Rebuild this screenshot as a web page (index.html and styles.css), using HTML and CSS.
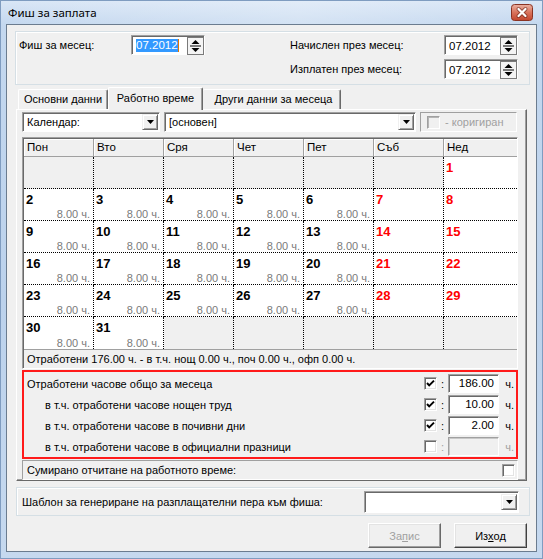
FILE: index.html
```html
<!DOCTYPE html>
<html>
<head>
<meta charset="utf-8">
<title>Фиш за заплата</title>
<link rel="stylesheet" href="styles.css">
</head>
<body>
<div class="window">
  <div class="titlebar">
    <span class="title">Фиш за заплата</span>
    <span class="close">
      <svg width="22" height="17" viewBox="0 0 22 17">
        <defs>
          <linearGradient id="cg" x1="0" y1="0" x2="0" y2="1">
            <stop offset="0" stop-color="#eab1a2"/>
            <stop offset="0.5" stop-color="#d9735c"/>
            <stop offset="1" stop-color="#c2452d"/>
          </linearGradient>
        </defs>
        <rect x="0.5" y="0.5" width="21" height="16" rx="3" fill="url(#cg)" stroke="#8a3323"/>
        <path d="M7.5 5 L14.5 12 M14.5 5 L7.5 12" stroke="#5a1a10" stroke-width="4" stroke-linecap="round" opacity="0.55"/>
        <path d="M7.5 5 L14.5 12 M14.5 5 L7.5 12" stroke="#fff" stroke-width="2.2" stroke-linecap="round"/>
      </svg>
    </span>
  </div>
  <div class="client">
    <div class="group-top">
      <div class="fld">
        <span class="lbl lbl-left">Фиш за месец:</span>
        <div class="spin">
          <span class="spin-text"><span class="sel">07.2012</span></span>
          <span class="spin-btn"><svg width="17" height="18" viewBox="0 0 17 18"><rect x="0.5" y="0.5" width="16" height="17" fill="#f4f4f4" stroke="#7a7a7a"/><polygon points="4.5,7 12.5,7 8.5,3" fill="#000"/><rect x="3" y="8.5" width="11" height="1" fill="#000"/><polygon points="4.5,11 12.5,11 8.5,15" fill="#000"/></svg></span>
        </div>
      </div>
      <div class="right-fields">
        <div class="fld">
          <span class="lbl lbl-right">Начислен през месец:</span>
          <div class="spin">
            <span class="spin-text">07.2012</span>
            <span class="spin-btn"><svg width="17" height="18" viewBox="0 0 17 18"><rect x="0.5" y="0.5" width="16" height="17" fill="#f4f4f4" stroke="#7a7a7a"/><polygon points="4.5,7 12.5,7 8.5,3" fill="#000"/><rect x="3" y="8.5" width="11" height="1" fill="#000"/><polygon points="4.5,11 12.5,11 8.5,15" fill="#000"/></svg></span>
          </div>
        </div>
        <div class="fld">
          <span class="lbl lbl-right">Изплатен през месец:</span>
          <div class="spin">
            <span class="spin-text">07.2012</span>
            <span class="spin-btn"><svg width="17" height="18" viewBox="0 0 17 18"><rect x="0.5" y="0.5" width="16" height="17" fill="#f4f4f4" stroke="#7a7a7a"/><polygon points="4.5,7 12.5,7 8.5,3" fill="#000"/><rect x="3" y="8.5" width="11" height="1" fill="#000"/><polygon points="4.5,11 12.5,11 8.5,15" fill="#000"/></svg></span>
          </div>
        </div>
      </div>
    </div>

    <div class="tabs">
      <div class="tab tab1">Основни данни</div>
      <div class="tab tab2 active">Работно време</div>
      <div class="tab tab3">Други данни за месеца</div>
    </div>

    <div class="panel">
      <div class="toolbar">
        <div class="combo combo1">
          <span class="combo-text">Календар:</span>
          <span class="dd"><svg width="7" height="4" viewBox="0 0 7 4"><polygon points="0,0 7,0 3.5,4" fill="#000"/></svg></span>
        </div>
        <div class="combo combo2">
          <span class="combo-text">[основен]</span>
          <span class="dd"><svg width="7" height="4" viewBox="0 0 7 4"><polygon points="0,0 7,0 3.5,4" fill="#000"/></svg></span>
        </div>
        <div class="checkgroup">
          <span class="chk dis"></span>
          <span class="dis-text">- коригиран</span>
        </div>
      </div>

      <div class="calendar">
        <div class="cal-head">
          <div class="hc">Пон</div><div class="hc">Вто</div><div class="hc">Сря</div><div class="hc">Чет</div><div class="hc">Пет</div><div class="hc">Съб</div><div class="hc">Нед</div>
        </div>
        <div class="cal-grid">
          <div class="c e"></div><div class="c e"></div><div class="c e"></div><div class="c e"></div><div class="c e"></div><div class="c e"></div><div class="c r"><b>1</b></div>
          <div class="c"><b>2</b><span class="h">8.00 ч.</span></div><div class="c"><b>3</b><span class="h">8.00 ч.</span></div><div class="c"><b>4</b><span class="h">8.00 ч.</span></div><div class="c"><b>5</b><span class="h">8.00 ч.</span></div><div class="c"><b>6</b><span class="h">8.00 ч.</span></div><div class="c r"><b>7</b></div><div class="c r"><b>8</b></div>
          <div class="c"><b>9</b><span class="h">8.00 ч.</span></div><div class="c"><b>10</b><span class="h">8.00 ч.</span></div><div class="c"><b>11</b><span class="h">8.00 ч.</span></div><div class="c"><b>12</b><span class="h">8.00 ч.</span></div><div class="c"><b>13</b><span class="h">8.00 ч.</span></div><div class="c r"><b>14</b></div><div class="c r"><b>15</b></div>
          <div class="c"><b>16</b><span class="h">8.00 ч.</span></div><div class="c"><b>17</b><span class="h">8.00 ч.</span></div><div class="c"><b>18</b><span class="h">8.00 ч.</span></div><div class="c"><b>19</b><span class="h">8.00 ч.</span></div><div class="c"><b>20</b><span class="h">8.00 ч.</span></div><div class="c r"><b>21</b></div><div class="c r"><b>22</b></div>
          <div class="c"><b>23</b><span class="h">8.00 ч.</span></div><div class="c"><b>24</b><span class="h">8.00 ч.</span></div><div class="c"><b>25</b><span class="h">8.00 ч.</span></div><div class="c"><b>26</b><span class="h">8.00 ч.</span></div><div class="c"><b>27</b><span class="h">8.00 ч.</span></div><div class="c r"><b>28</b></div><div class="c r"><b>29</b></div>
          <div class="c"><b>30</b><span class="h">8.00 ч.</span></div><div class="c"><b>31</b><span class="h">8.00 ч.</span></div><div class="c e"></div><div class="c e"></div><div class="c e"></div><div class="c e"></div><div class="c e"></div>
        </div>
        <div class="cal-summary">Отработени 176.00 ч. - в т.ч. нощ 0.00 ч., поч 0.00 ч., офп 0.00 ч.</div>
      </div>

      <div class="redbox">
        <div class="rrow">
          <span class="rlabel">Отработени часове общо за месеца</span>
          <span class="rctl"><span class="chk"><svg width="9" height="9" viewBox="0 0 9 9"><polyline points="1,4 3.2,6.4 8,1.6" fill="none" stroke="#000" stroke-width="2"/></svg></span><span class="colon">:</span><span class="num">186.00</span><span class="unit">ч.</span></span>
        </div>
        <div class="rrow">
          <span class="rlabel ind">в т.ч. отработени часове нощен труд</span>
          <span class="rctl"><span class="chk"><svg width="9" height="9" viewBox="0 0 9 9"><polyline points="1,4 3.2,6.4 8,1.6" fill="none" stroke="#000" stroke-width="2"/></svg></span><span class="colon">:</span><span class="num">10.00</span><span class="unit">ч.</span></span>
        </div>
        <div class="rrow">
          <span class="rlabel ind">в т.ч. отработени часове в почивни дни</span>
          <span class="rctl"><span class="chk"><svg width="9" height="9" viewBox="0 0 9 9"><polyline points="1,4 3.2,6.4 8,1.6" fill="none" stroke="#000" stroke-width="2"/></svg></span><span class="colon">:</span><span class="num">2.00</span><span class="unit">ч.</span></span>
        </div>
        <div class="rrow">
          <span class="rlabel ind">в т.ч. отработени часове в официални празници</span>
          <span class="rctl"><span class="chk"></span><span class="colon dim">:</span><span class="num off"></span><span class="unit dim">ч.</span></span>
        </div>
      </div>

      <div class="sumbox">
        <span class="sumlabel">Сумирано отчитане на работното време:</span>
        <span class="chk"></span>
      </div>
    </div>

    <div class="group-bottom">
      <span class="blabel">Шаблон за генериране на разплащателни пера към фиша:</span>
      <div class="combo combo3">
        <span class="combo-text"></span>
        <span class="dd"><svg width="7" height="4" viewBox="0 0 7 4"><polygon points="0,0 7,0 3.5,4" fill="#000"/></svg></span>
      </div>
    </div>

    <div class="buttons">
      <div class="btn disabled">За<u>п</u>ис</div>
      <div class="btn default">Из<u>х</u>од</div>
    </div>
  </div>
</div>
</body>
</html>
```

FILE: styles.css
```css
html, body {
  margin: 0;
  padding: 0;
}
body {
  font-family: "Liberation Sans", Arial, sans-serif;
  font-size: 11px;
  color: #000;
  background: #fff;
}

.window {
  width: 543px;
  height: 559px;
  box-sizing: border-box;
  border: 1px solid #7f9cc0;
  background: linear-gradient(to bottom, #d9e6f6 0px, #c4d8ef 24px, #bcd2ec 300px, #c6d9ef 559px);
  padding: 0 5px 6px 5px;
  display: flex;
  flex-direction: column;
}

.titlebar {
  height: 23px;
  flex: none;
  display: flex;
  align-items: center;
  justify-content: space-between;
  padding-left: 2px;
  background: linear-gradient(to right, rgba(255,255,255,0) 0%, rgba(255,255,255,0.25) 55%, rgba(255,255,255,0) 100%);
}
.title {
  font-family: "Noto Sans", "DejaVu Sans", sans-serif;
  font-size: 11.5px;
  color: #000;
}
.close {
  width: 22px;
  height: 17px;
  margin-right: 4px;
  display: block;
}
.close svg { display: block; }

.client {
  flex: 1;
  border: 1px solid #6b7c8f;
  background: #f0f0f0;
  padding: 6px 5px 0 8px;
  display: flex;
  flex-direction: column;
}

/* top group */
.group-top {
  width: 515px;
  height: 54px;
  box-sizing: border-box;
  border: 1px solid #d5dfe5;
  box-shadow: inset 1px 1px 0 #fff;
  display: flex;
  align-items: flex-start;
  padding: 3px 11px 0 3px;
}
.fld {
  display: flex;
  align-items: center;
  height: 20px;
}
.lbl-left { width: 112px; }
.lbl-right { width: 154px; }
.right-fields {
  margin-left: auto;
  display: flex;
  flex-direction: column;
  gap: 4px;
}

.spin {
  width: 74px;
  height: 20px;
  box-sizing: border-box;
  display: flex;
  border: 1px solid;
  border-color: #a0a0a0 #ffffff #ffffff #a0a0a0;
  box-shadow: inset 1px 1px 0 #696969;
  background: #fff;
  padding: 1px 0 0 1px;
}
.spin-text {
  flex: 1;
  display: flex;
  align-items: center;
  padding-left: 3px;
  font-size: 11.5px;
}
.sel {
  background: #3399ff;
  color: #fff;
  line-height: 13px;
  border-right: 1px solid #e27600;
}
.spin-btn {
  width: 17px;
  height: 18px;
  display: block;
}
.spin-btn svg { display: block; }

/* tabs */
.tabs {
  display: flex;
  align-items: flex-end;
  height: 22px;
  margin-top: 2px;
  margin-left: 3px;
  position: relative;
  z-index: 1;
}
.tab {
  height: 20px;
  box-sizing: border-box;
  display: flex;
  align-items: center;
  justify-content: center;
  border-top: 1px solid #fff;
  border-left: 1px solid #fff;
  border-right: 1px solid #696969;
  box-shadow: inset -1px 0 0 #a0a0a0;
  border-radius: 2px 2px 0 0;
  background: #f0f0f0;
  padding-bottom: 1px;
}
.tab1 { width: 90px; }
.tab2 { width: 95px; }
.tab3 { width: 138px; border-left: none; padding-left: 4px; }
.tab.active {
  height: 23px;
  margin-bottom: -1px;
  padding-bottom: 3px;
}

.panel {
  width: 511px;
  height: 372px;
  box-sizing: border-box;
  margin-left: 1px;
  border: 1px solid;
  border-color: #fff #696969 #696969 #fff;
  box-shadow: inset -1px -1px 0 #a0a0a0;
  padding: 2px 8px 0 5px;
  display: flex;
  flex-direction: column;
}

/* toolbar */
.toolbar {
  display: flex;
  gap: 4px;
  height: 20px;
}
.combo {
  height: 20px;
  box-sizing: border-box;
  display: flex;
  align-items: center;
  border: 1px solid;
  border-color: #a0a0a0 #ffffff #ffffff #a0a0a0;
  box-shadow: inset 1px 1px 0 #696969;
  background: #fff;
  padding: 1px;
}
.combo1 { width: 138px; }
.combo2 { width: 252px; }
.combo-text {
  flex: 1;
  padding-left: 3px;
  font-size: 11px;
}
.dd {
  width: 16px;
  height: 16px;
  box-sizing: border-box;
  display: flex;
  align-items: center;
  justify-content: center;
  background: #f0f0f0;
  border: 1px solid;
  border-color: #f0f0f0 #696969 #696969 #f0f0f0;
  box-shadow: inset 1px 1px 0 #fff, inset -1px -1px 0 #a0a0a0;
}
.dd svg { display: block; }
.checkgroup {
  width: 97px;
  height: 20px;
  box-sizing: border-box;
  border: 1px solid;
  border-color: #a0a0a0 #ffffff #ffffff #a0a0a0;
  display: flex;
  align-items: center;
  padding-left: 6px;
}
.dis-text {
  color: #a0a0a0;
  margin-left: 5px;
  font-size: 11px;
}

/* checkbox */
.chk {
  width: 13px;
  height: 13px;
  box-sizing: border-box;
  border: 1px solid;
  border-color: #a0a0a0 #ffffff #ffffff #a0a0a0;
  box-shadow: inset 1px 1px 0 #696969, inset -1px -1px 0 #e3e3e3;
  background: #fff;
  display: flex;
  align-items: center;
  justify-content: center;
  flex: none;
}
.chk svg { display: block; }
.chk.dis {
  background: #f0f0f0;
  box-shadow: inset 1px 1px 0 #b5b5b5;
}

/* calendar */
.calendar {
  margin-top: 5px;
  width: 496px;
  box-sizing: border-box;
  border: 1px solid;
  border-color: #a0a0a0 #ffffff #ffffff #a0a0a0;
  box-shadow: inset 1px 1px 0 #696969;
  padding: 1px 0 0 1px;
  background: #f0f0f0;
}
.cal-head,
.cal-grid {
  display: grid;
  grid-template-columns: repeat(6, 70px) 1fr;
}
.hc {
  height: 18px;
  box-sizing: border-box;
  padding-left: 3px;
  line-height: 17px;
  font-size: 11.5px;
  border-right: 1px solid #a0a0a0;
  border-bottom: 1px solid #a0a0a0;
  box-shadow: inset 1px 1px 0 #fff;
  background: #f0f0f0;
}
.hc:last-child { border-right: none; }
.cal-grid {
  grid-template-rows: repeat(6, 32px);
}
.c {
  box-sizing: border-box;
  border-right: 1px dotted #000;
  border-bottom: 1px dotted #000;
  background: #fff;
  display: flex;
  flex-direction: column;
  justify-content: space-between;
  padding: 3px 3px 0 2px;
}
.c b {
  font-size: 13px;
  line-height: 15px;
  font-weight: bold;
}
.c .h {
  align-self: flex-end;
  color: #7a7a7a;
  font-size: 11px;
  line-height: 12px;
}
.c.e { background: #f0f0f0; }
.c.r b { color: #ff0000; }
.cal-grid .c:nth-child(7n) { border-right: none; }
.cal-grid .c:nth-child(n+36) { border-bottom: none; }
.cal-summary {
  height: 18px;
  line-height: 18px;
  padding-left: 3px;
  border-top: 1px solid #a0a0a0;
  font-size: 11px;
  white-space: nowrap;
  overflow: hidden;
}

/* red box */
.redbox {
  margin-top: 1px;
  width: 496px;
  box-sizing: border-box;
  border: 2px solid #ff1a1a;
  padding: 1px 0 0 0;
}
.rrow {
  height: 21px;
  display: flex;
  align-items: center;
}
.rlabel {
  padding-left: 3px;
  font-size: 11px;
}
.rlabel.ind { padding-left: 21px; }
.rctl {
  margin-left: auto;
  display: flex;
  align-items: center;
  padding-right: 2px;
}
.colon {
  width: 11px;
  text-align: center;
  font-size: 11px;
}
.num {
  width: 51px;
  height: 19px;
  box-sizing: border-box;
  border: 1px solid;
  border-color: #a0a0a0 #ffffff #ffffff #a0a0a0;
  box-shadow: inset 1px 1px 0 #696969;
  background: #fff;
  text-align: right;
  padding-right: 4px;
  line-height: 17px;
  font-size: 11.5px;
}
.num.off {
  background: #f0f0f0;
  box-shadow: inset 1px 1px 0 #c8c8c8;
}
.unit {
  width: 15px;
  text-align: right;
  font-size: 11px;
}
.dim { color: #a0a0a0; }

/* summing box */
.sumbox {
  margin-top: 1px;
  width: 496px;
  height: 20px;
  box-sizing: border-box;
  border: 1px solid;
  border-color: #a0a0a0 #ffffff #ffffff #a0a0a0;
  display: flex;
  align-items: center;
  padding: 0 2px 0 4px;
}
.sumlabel {
  flex: 1;
  font-size: 11px;
}

/* bottom group */
.group-bottom {
  margin-top: 6px;
  margin-left: 1px;
  width: 514px;
  height: 29px;
  box-sizing: border-box;
  border: 1px solid #d5dfe5;
  box-shadow: inset 1px 1px 0 #fff;
  display: flex;
  align-items: center;
  padding: 0 10px 0 5px;
}
.blabel {
  flex: 1;
  font-size: 11px;
}
.combo3 {
  width: 155px;
  height: 22px;
}

/* buttons */
.buttons {
  margin-top: 7px;
  display: flex;
  justify-content: flex-end;
  gap: 13px;
  margin-right: 4px;
}
.btn {
  width: 73px;
  height: 25px;
  box-sizing: border-box;
  display: flex;
  align-items: center;
  justify-content: center;
  background: #f0f0f0;
  border: 1px solid;
  border-color: #ffffff #696969 #696969 #ffffff;
  box-shadow: inset -1px -1px 0 #a0a0a0, inset 1px 1px 0 #e3e3e3;
  font-size: 11px;
}
.btn.disabled { color: #a0a0a0; }
.btn.default {
  border-color: #ffffff #404040 #404040 #ffffff;
}
```
